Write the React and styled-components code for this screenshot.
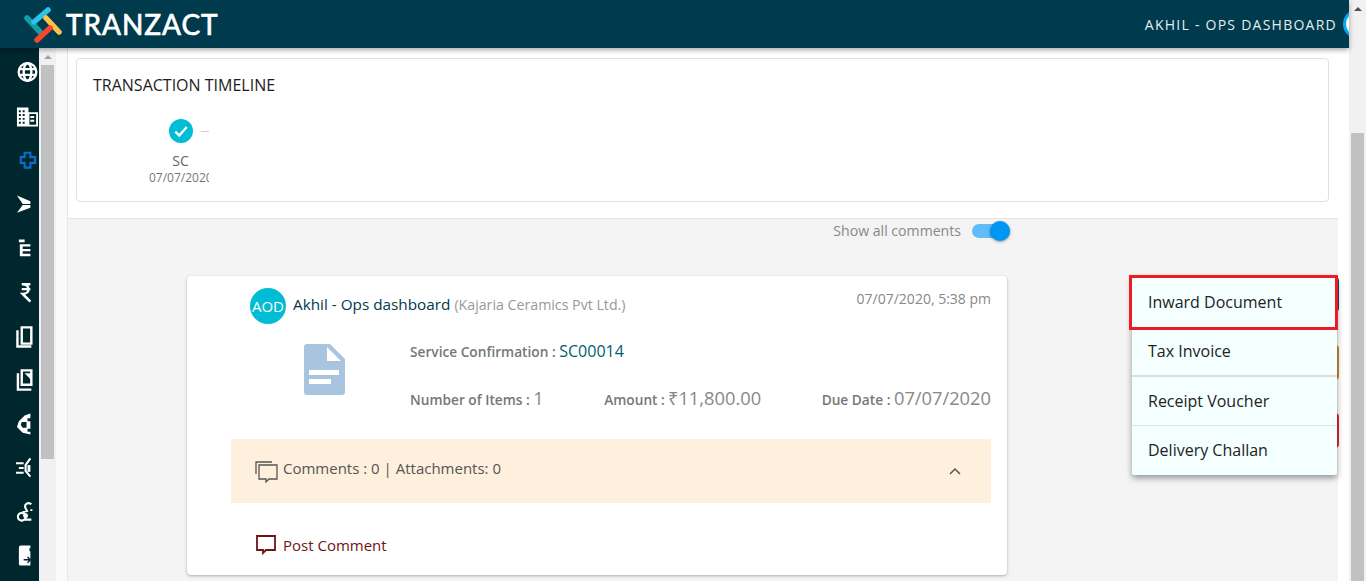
import React from "react";
import styled, { createGlobalStyle } from "styled-components";

const Global = createGlobalStyle`
  html, body { margin: 0; padding: 0; overflow: hidden; background: #fff; }
  body { font-family: "Open Sans", "Liberation Sans", sans-serif; color: #333; }
  * { box-sizing: border-box; }
`;

const Shell = styled.div`display: flex; width: 1366px; height: 581px; overflow: hidden; position: relative;`;
const Page = styled.div`flex: 1; min-width: 0; display: flex; flex-direction: column;`;
const Header = styled.header`
  height: 48px; background: #003a4d; display: flex; align-items: center; justify-content: space-between;
  position: relative; z-index: 5; box-shadow: 0 2px 5px rgba(0,0,0,.35); overflow: hidden; padding-left: 23px;
`;
const Brand = styled.div`display: flex; align-items: center;`;
const BrandName = styled.span`
  font-family: Lato, "Open Sans", sans-serif; font-size: 28px; font-weight: 400; letter-spacing: .95px; color: #fff;
  margin-left: 3px; -webkit-text-stroke: .7px #fff; line-height: 48px;
`;
const UserBox = styled.div`display: flex; align-items: center; gap: 6px; margin-right: -24px;`;
const UserName = styled.span`font-size: 14px; font-weight: 500; letter-spacing: 1.25px; color: #e6eef0;`;
const UserRing = styled.span`width: 30px; height: 30px; border-radius: 50%; background: #fff; border: 3px solid #03a9f4; flex: none;`;

const Body = styled.div`flex: 1; min-height: 0; display: flex;`;
const Sidebar = styled.nav`width: 39px; flex: none; background: #00262e; overflow: hidden; padding: 12px 0 0 16px; display: flex; flex-direction: column;`;
const SideItem = styled.div`height: 44px; flex: none; display: flex; align-items: flex-start; svg { display: block; }`;

const Track = styled.div`
  width: 17px; flex: none; background: #f1f1f1; display: flex; flex-direction: column; align-items: center;
  padding-top: ${p => p.$top}px;
`;
const Arrow = styled.span`
  width: 0; height: 0; border-left: 4px solid transparent; border-right: 4px solid transparent;
  border-bottom: 4px solid ${p => p.$c}; margin-bottom: ${p => p.$gap}px; flex: none;
`;
const Thumb = styled.span`width: 13px; background: #c1c1c1; flex: none; height: ${p => p.$h}px;`;

const Main = styled.main`flex: 1; min-width: 0; background: #fafafa; padding-left: 11px; display: flex;`;
const Panel = styled.div`flex: 1; min-width: 0; border-left: 1px solid #e6e6e6; display: flex; flex-direction: column; background: #f4f4f4; position: relative;`;
const RightGutter = styled.div`width: 11px; flex: none; background: #fff;`;
const TopSection = styled.section`background: #fff; padding: 10px 9px 16px 8px; border-bottom: 1px solid #e2e2e2;`;
const TimelineCard = styled.div`border: 1px solid #e0e0e0; border-radius: 4px; height: 144px; padding: 15px 16px;`;
const CardTitle = styled.h2`margin: 0; font-size: 16px; font-weight: 500; line-height: 22px; color: #1d1d1d;`;
const StepClip = styled.div`width: 116px; overflow: hidden; padding: 20px 0 0 56px; margin-top: 3px;`;
const Step = styled.div`width: 62px; white-space: nowrap; text-align: center;`;
const StepTop = styled.div`display: flex; align-items: center; padding-left: 20px; gap: 8px;`;
const StepCheck = styled.span`width: 24px; height: 24px; border-radius: 50%; background: #00bcd4; display: flex; align-items: center; justify-content: center; flex: none;`;
const StepLine = styled.span`width: 8px; height: 1px; background: #cfcfcf; flex: none;`;
const StepName = styled.div`font-size: 14px; line-height: 18px; color: #666; margin-top: 9px; padding-left: 1px;`;
const StepDate = styled.div`font-size: 12px; line-height: 14px; color: #777; margin-top: 1px;`;

const ToggleRow = styled.div`display: flex; justify-content: flex-end; align-items: center; gap: 11px; padding: 0 328px 1px 0; height: 24px; margin-bottom: 33px;`;
const ToggleLabel = styled.span`font-size: 14.1px; color: #888;`;
const ToggleTrack = styled.span`width: 38px; height: 14px; border-radius: 7px; background: #61bcf8; display: flex; justify-content: flex-end; align-items: center; margin-top: 1px;`;
const ToggleKnob = styled.span`width: 20px; height: 20px; border-radius: 50%; background: #0097f4; box-shadow: 0 1px 3px rgba(0,0,0,.4); flex: none;`;

const CommentWrap = styled.div`padding-left: 119px; padding-right: 331px;`;
const CommentCard = styled.article`background: #fff; border-radius: 4px; box-shadow: 0 1px 3px rgba(0,0,0,.3); height: 299px; padding: 12px 16px 0 44px;`;
const CommentHead = styled.div`display: flex; align-items: flex-start; padding-left: 19px;`;
const Avatar = styled.span`width: 36px; height: 36px; border-radius: 50%; background: #00bcd4; color: #fff; font-size: 15px; display: flex; align-items: center; justify-content: center; flex: none;`;
const Author = styled.div`margin-left: 7px; font-size: 15.3px; line-height: 20px; color: #003a4d; flex: 1; margin-top: 6px;`;
const Org = styled.span`font-size: 14.2px; color: #999;`;
const Stamp = styled.time`font-size: 14px; line-height: 22px; color: #888;`;
const DocRow = styled.div`display: flex; margin-top: 17px;`;
const DocIcon = styled.div`width: 179px; padding: 3px 0 0 73px; flex: none; svg { display: block; }`;
const DocInfo = styled.div`flex: 1; min-width: 0;`;
const InfoLine = styled.div`font-size: 13.7px; font-weight: 600; color: #777; line-height: 20px;`;
const DocLink = styled.span`font-size: 16px; font-weight: 500; color: #00606f;`;
const Stats = styled.div`display: flex; justify-content: space-between; margin-top: 26px; white-space: nowrap;`;
const StatValue = styled.span`font-size: 18.3px; font-weight: 400; color: #888;`;
const CommentBar = styled.div`height: 64px; margin-top: 29px; background: #fef0dd; display: flex; align-items: center; padding: 0 29px 0 24px; font-size: 15px; color: #555;`;
const BarText = styled.span`flex: 1; margin: 0 0 6px 5px;`;
const PostRow = styled.div`display: flex; align-items: center; gap: 7px; margin: 32px 0 0 25px; font-size: 15px; color: #6d1414;`;

const Fab = styled.span`
  position: absolute; left: 1259px; width: 12px; height: 35px; border-radius: 4px; background: ${p => p.$c}; top: ${p => p.$top}px;
`;
const Menu = styled.div`
  position: absolute; left: 1064px; top: 228px; width: 205px; background: #f4ffff; border-radius: 2px;
  box-shadow: 0 3px 6px rgba(0,0,0,.4); display: flex; flex-direction: column;
`;
const MenuItem = styled.div`
  height: ${p => p.$h}px; display: flex; align-items: center; padding: 0 0 ${p => p.$pb || 0}px 16px; font-size: 16px; color: #222;
  border-bottom: ${p => p.$line ? `${p.$lw || 1}px solid ${p.$line}` : "0"};
`;
const Highlight = styled.span`
  position: absolute; left: -3px; top: -1px; width: 209px; height: 55px; border: 3px solid #ed1c24; pointer-events: none;
`;

const W = { fill: "none", stroke: "#fff", strokeWidth: 2.5 };
const icons = [
  <svg width="24" height="24" viewBox="0 0 24 24"><g {...W}><circle cx="12" cy="12" r="9.2" /><ellipse cx="12" cy="12" rx="4" ry="9.2" /><path d="M3 9h18M3 15h18" /></g></svg>,
  <svg width="24" height="24" viewBox="0 0 24 24"><path fill="#fff" fillRule="evenodd" d="M1 3h12v5h10v15H1zM3 6v2h2V6zm4 0v2h2V6zM3 10v2h2v-2zm4 0v2h2v-2zM3 14v2h2v-2zm4 0v2h2v-2zM3 18v2h2v-2zm4 0v2h2v-2zm7-8v11h7V10z" /><path fill="#fff" d="M15 12h4v2h-4zM15 16h4v2h-4z" /></svg>,
  <svg width="24" height="24" viewBox="0 0 24 24"><path fill="none" stroke="#0a6fc9" strokeWidth="2.2" d="M9 4.5h6v4.5h5v6h-5v5H9v-5H5V9h4z" /></svg>,
  <svg width="24" height="24" viewBox="0 0 24 24"><path fill="#fff" d="M1 3l14 6v3H7zM1 21l14-5v-3H7z" /></svg>,
  <svg width="24" height="24" viewBox="0 0 24 24"><path fill="#fff" d="M3 3h6v3H3zM4 8h11v2.5H7v2.5h8v2.5H7V18h8v2.5H4z" /></svg>,
  <svg width="24" height="24" viewBox="0 0 24 24"><path fill="none" stroke="#fff" strokeWidth="2.6" d="M6 4h9M6 9h9M7 4c8 0 8 10 0 10l8 8" /></svg>,
  <svg width="24" height="24" viewBox="0 0 24 24"><path fill="none" stroke="#fff" strokeWidth="2.5" d="M6 3h10v17H6zM1.5 6v17H16" /></svg>,
  <svg width="24" height="24" viewBox="0 0 24 24"><path fill="none" stroke="#fff" strokeWidth="2.5" d="M6 2h10v15H6zM2 5v17h14" /><path fill="#fff" d="M9 5l7 7V5z" /></svg>,
  <svg width="24" height="24" viewBox="0 0 24 24"><path fill="#fff" fillRule="evenodd" d="M9 3l6-2v22l-8-2-6-6 2-6zM6 10l-1 3 2 3h4v-6zM12 6v3h3V6zM12 17v3h3v-3z" /></svg>,
  <svg width="24" height="24" viewBox="0 0 24 24"><path fill="none" stroke="#fff" strokeWidth="2.2" d="M0 7h8M3 12h5M0 17h8M15 2l-5 7v6l5 6" /><path fill="#fff" d="M12 9h3v7h-3z" /></svg>,
  <svg width="24" height="24" viewBox="0 0 24 24"><g fill="none" stroke="#fff" strokeWidth="2.2"><circle cx="6" cy="17" r="4" /><path d="M16 4c-3-3-8 0-6 4l2 4M6 13l6-3M9 20h7M16 9v2" /><circle cx="10" cy="16" r="1.5" /></g></svg>,
  <svg width="24" height="24" viewBox="0 0 24 24"><path fill="#fff" d="M5 1h10v3h-1v3h1v15H5a2 2 0 0 1-2-2V3a2 2 0 0 1 2-2z" /><path fill="none" stroke="#00262e" strokeWidth="1.5" d="M8 16h7M12 13l3 3-3 3" /></svg>,
];

export default function App() {
  return (
    <Shell>
      <Global />
      <Page>
        <Header>
          <Brand>
            <svg width="40" height="40" viewBox="0 0 40 40" fill="none" strokeWidth="5.5" strokeLinecap="round">
              <path stroke="#12a0a8" d="M4 14L18 29" />
              <path stroke="#29c3ee" d="M11 18L25 6" />
              <path stroke="#fdc24a" d="M23 14L36 28" />
              <path stroke="#f4472c" d="M14 36L27 24" />
            </svg>
            <BrandName>TRANZACT</BrandName>
          </Brand>
          <UserBox>
            <UserName>AKHIL - OPS DASHBOARD</UserName>
            <UserRing />
          </UserBox>
        </Header>
        <Body>
          <Sidebar>
            {icons.map((icon, i) => <SideItem key={i}>{icon}</SideItem>)}
          </Sidebar>
          <Track $top={7}>
            <Arrow $c="#a3a3a3" $gap={6} />
            <Thumb $h={394} />
          </Track>
          <Main>
            <Panel>
              <TopSection>
                <TimelineCard>
                  <CardTitle>TRANSACTION TIMELINE</CardTitle>
                  <StepClip>
                    <Step>
                      <StepTop>
                        <StepCheck>
                          <svg width="16" height="16" viewBox="0 0 14 14"><path fill="none" stroke="#fff" strokeWidth="2" d="M2 7.5l3.5 3.5L12 3.5" /></svg>
                        </StepCheck>
                        <StepLine />
                      </StepTop>
                      <StepName>SC</StepName>
                      <StepDate>07/07/2020</StepDate>
                    </Step>
                  </StepClip>
                </TimelineCard>
              </TopSection>
              <ToggleRow>
                <ToggleLabel>Show all comments</ToggleLabel>
                <ToggleTrack><ToggleKnob /></ToggleTrack>
              </ToggleRow>
              <CommentWrap>
                <CommentCard>
                  <CommentHead>
                    <Avatar>AOD</Avatar>
                    <Author>Akhil - Ops dashboard <Org>(Kajaria Ceramics Pvt Ltd.)</Org></Author>
                    <Stamp>07/07/2020, 5:38 pm</Stamp>
                  </CommentHead>
                  <DocRow>
                    <DocIcon>
                      <svg width="41" height="51" viewBox="0 0 41 51">
                        <path fill="#a9c4de" fillRule="evenodd" d="M3 0h23l15 15v33a3 3 0 0 1-3 3H3a3 3 0 0 1-3-3V3a3 3 0 0 1 3-3zM23 3v14h14zM5 26v5h30v-5zM5 35v5h22v-5z" />
                      </svg>
                    </DocIcon>
                    <DocInfo>
                      <InfoLine>Service Confirmation : <DocLink>SC00014</DocLink></InfoLine>
                      <Stats>
                        <InfoLine>Number of Items : <StatValue>1</StatValue></InfoLine>
                        <InfoLine>Amount : <StatValue>₹11,800.00</StatValue></InfoLine>
                        <InfoLine>Due Date : <StatValue>07/07/2020</StatValue></InfoLine>
                      </Stats>
                    </DocInfo>
                  </DocRow>
                  <CommentBar>
                    <svg width="23" height="23" viewBox="0 0 23 23" fill="none" stroke="#555" strokeWidth="1.3">
                      <path d="M17 2H1v12" />
                      <path d="M4 5h18v14h-8l-3 3v-3H4z" />
                    </svg>
                    <BarText>Comments : 0 | Attachments: 0</BarText>
                    <svg width="14" height="14" viewBox="0 0 14 14"><path fill="none" stroke="#555" strokeWidth="1.5" d="M2 10l5-5 5 5" /></svg>
                  </CommentBar>
                  <PostRow>
                    <svg width="20" height="20" viewBox="0 0 20 20" fill="none" stroke="#6d1414" strokeWidth="1.8">
                      <path d="M1 1h18v14h-9l-3 3v-3H1z" />
                    </svg>
                    Post Comment
                  </PostRow>
                </CommentCard>
              </CommentWrap>
              <Fab $c="#00506a" $top={229} />
              <Fab $c="#c98a33" $top={297} />
              <Fab $c="#e5282c" $top={365} />
              <Menu>
                <MenuItem $h={52}>Inward Document<Highlight /></MenuItem>
                <MenuItem $h={49} $line="#dcdcdc" $lw={2} $pb={1}>Tax Invoice</MenuItem>
                <MenuItem $h={49} $line="#dde3e6">Receipt Voucher</MenuItem>
                <MenuItem $h={49} $pb={2}>Delivery Challan</MenuItem>
              </Menu>
            </Panel>
            <RightGutter />
          </Main>
        </Body>
      </Page>
      <Track $top={7}>
        <Arrow $c="#505050" $gap={122} />
        <Thumb $h={448} />
      </Track>
    </Shell>
  );
}
